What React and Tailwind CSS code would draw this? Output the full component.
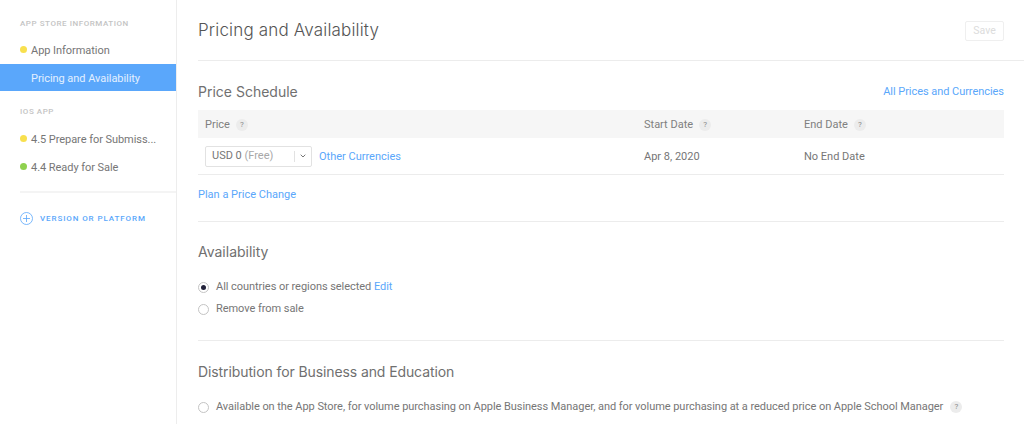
import React from "react";

const Help = ({ className = "" }) => (
    <span className={`inline-flex items-center justify-center w-[12px] h-[12px] rounded-full bg-[#ececec] text-[#8a8a8a] text-[8px] leading-none ${className}`}>
        ?
    </span>
);

const Radio = ({ checked }) => (
    <span className="flex items-center justify-center w-[11px] h-[11px] rounded-full border border-[#c4c4c4] bg-white shrink-0">
        {checked && <span className="w-[5px] h-[5px] rounded-full bg-[#22223a]"></span>}
    </span>
);

const NavItem = ({ dot, active, children }) => (
    <div className={`flex items-center h-[27.5px] pl-[20px] ${active ? "bg-[#5aa7fb] text-[#e3f0ff]" : "text-[#767676]"}`}>
        <span className={`w-[7px] h-[7px] rounded-full mr-[4px] shrink-0 ${dot || ""}`}></span>
        <span className="pt-[3px] text-[11px] tracking-[-0.05px] whitespace-nowrap">{children}</span>
    </div>
);

export default function App() {
    return (
        <div className="flex w-[1024px] h-[424px] overflow-hidden bg-white font-['Roboto','Liberation_Sans',sans-serif] text-[#767676]">
            {/* Sidebar */}
            <aside className="w-[177px] shrink-0 border-r border-[#ededed] pt-[19px]">
                <div className="pl-[20px] h-[10px] flex items-center text-[8px] tracking-[0.55px] text-[#c4c4c4] font-medium">
                    APP STORE INFORMATION
                </div>
                <div className="mt-[7px]">
                    <NavItem dot="bg-[#f8e04e]">App Information</NavItem>
                    <NavItem active>Pricing and Availability</NavItem>
                </div>
                <div className="mt-[16px] pl-[20px] h-[10px] flex items-center text-[8px] tracking-[0.55px] text-[#c4c4c4] font-medium">
                    IOS APP
                </div>
                <div className="mt-[8px]">
                    <NavItem dot="bg-[#f8e04e]">4.5 Prepare for Submiss...</NavItem>
                    <NavItem dot="bg-[#8fd14f]">4.4 Ready for Sale</NavItem>
                </div>
                <div className="ml-[20px] mt-[11px] border-t-2 border-[#f4f4f4]"></div>
                <div className="flex items-center pl-[20px] mt-[19px] text-[#5aa7fb]">
                    <svg width="13" height="13" viewBox="0 0 13 13" fill="none" stroke="currentColor" strokeWidth="0.8">
                        <circle cx="6.5" cy="6.5" r="6" />
                        <path d="M6.5 3v7M3 6.5h7" />
                    </svg>
                    <span className="ml-[7px] text-[8px] font-medium tracking-[0.9px]">VERSION OR PLATFORM</span>
                </div>
            </aside>

            {/* Main */}
            <main className="flex-1 min-w-0">
                <div className="flex items-center justify-between h-[61px] ml-[21px] border-b border-[#ececec] pr-[20px]">
                    <h1 className="pt-[2px] font-['Inter'] font-light text-[17px] tracking-[0.17px] text-[#555555]">Pricing and Availability</h1>
                    <button className="w-[39px] h-[20px] mb-[-1px] rounded-[2px] border border-[#efefef] text-[10.5px] text-[#dcdcdc]">
                        Save
                    </button>
                </div>

                <div className="pl-[21px] pr-[20px]">
                    {/* Price Schedule */}
                    <div className="flex items-center justify-between h-[49px] pt-[12px]">
                        <h2 className="font-['Inter'] text-[14px] text-[#707070]">Price Schedule</h2>
                        <a className="pt-[1px] text-[11px] tracking-[-0.05px] text-[#5aa7fb]">All Prices and Currencies</a>
                    </div>
                    <div className="grid grid-cols-[446px_160px_1fr] items-center h-[28px] pt-[2px] bg-[#f6f6f6] text-[11px] text-[#808080]">
                        <div className="flex items-center pl-[7px]">Price<Help className="ml-[6px]" /></div>
                        <div className="flex items-center">Start Date<Help className="ml-[6px]" /></div>
                        <div className="flex items-center">End Date<Help className="ml-[6px]" /></div>
                    </div>
                    <div className="grid grid-cols-[446px_160px_1fr] items-center h-[37px] border-b border-[#ececec] text-[11px] text-[#767676]">
                        <div className="flex items-center pl-[7px]">
                            <div className="flex items-center w-[107px] h-[21px] rounded-[2px] border border-[#e2e2e2]">
                                <span className="pl-[6px] flex-1">USD 0 <span className="text-[#a8a8a8]">(Free)</span></span>
                                <span className="flex items-center justify-center w-[17px] h-[11px] border-l border-[#e2e2e2]">
                                    <svg width="6" height="4" viewBox="0 0 6 4" fill="none" stroke="#777777" strokeWidth="1">
                                        <path d="M0.7 0.7L3 3L5.3 0.7" />
                                    </svg>
                                </span>
                            </div>
                            <a className="ml-[7px] pt-[3px] text-[#5aa7fb]">Other Currencies</a>
                        </div>
                        <div className="pt-[3px]">Apr 8, 2020</div>
                        <div className="pt-[3px]">No End Date</div>
                    </div>
                    <div className="h-[47px] border-b border-[#ececec] pt-[10px] leading-[15px]">
                        <a className="text-[11px] text-[#5aa7fb]">Plan a Price Change</a>
                    </div>

                    {/* Availability */}
                    <h2 className="mt-[20px] font-['Inter'] text-[14px] leading-[20px] text-[#707070]">Availability</h2>
                    <div className="mt-[18px] flex items-center h-[14px] text-[11px] tracking-[-0.05px]">
                        <Radio checked />
                        <span className="ml-[7px]">All countries or regions selected <a className="text-[#5aa7fb]">Edit</a></span>
                    </div>
                    <div className="mt-[8px] flex items-center h-[14px] text-[11px] tracking-[-0.05px]">
                        <Radio />
                        <span className="ml-[7px]">Remove from sale</span>
                    </div>
                    <div className="mt-[24px] border-t border-[#ececec]"></div>

                    {/* Distribution */}
                    <h2 className="mt-[21px] font-['Inter'] text-[14px] tracking-[-0.1px] leading-[20px] text-[#707070]">Distribution for Business and Education</h2>
                    <div className="mt-[18px] flex items-center h-[14px] text-[11px] tracking-[-0.05px] whitespace-nowrap">
                        <Radio />
                        <span className="ml-[7px]">Available on the App Store, for volume purchasing on Apple Business Manager, and for volume purchasing at a reduced price on Apple School Manager</span>
                        <Help className="ml-[7px]" />
                    </div>
                </div>
            </main>
        </div>
    );
}
